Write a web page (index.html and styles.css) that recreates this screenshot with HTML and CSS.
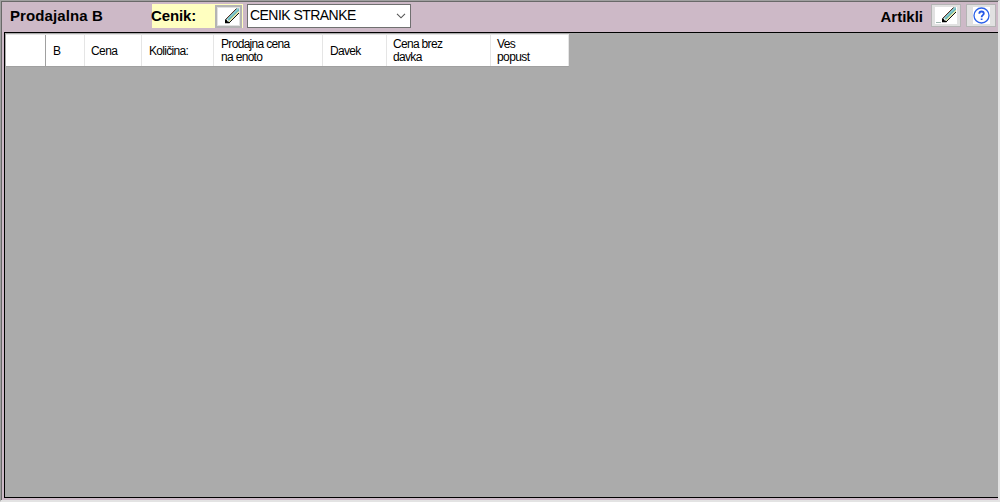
FILE: index.html
```
<!DOCTYPE html>
<html lang="sl">
<head>
<meta charset="utf-8">
<title>Prodajalna B</title>
<link rel="stylesheet" href="styles.css">
</head>
<body>
<main class="window">
  <header class="toolbar">
    <h1 class="title">Prodajalna B</h1>
    <div class="pricelist">
      <span class="label">Cenik:</span>
      <button class="tool" aria-label="Uredi cenik">
        <svg class="pencil" width="21" height="17" viewBox="0 0 21 17"><use href="#pencil"/></svg>
      </button>
      <div class="select"><span>CENIK STRANKE</span>
        <svg width="10" height="6" viewBox="0 0 10 6"><path d="M1 .8 5 4.8 9 .8" fill="none" stroke="#555" stroke-width="1.1"/></svg>
      </div>
    </div>
    <span class="articles">Artikli</span>
    <button class="tool wide" aria-label="Uredi artikle">
      <svg class="pencil" width="22" height="17" viewBox="0 0 22 17">
        <g id="pencil">
          <path d="M7.5 11.5 18.5.5H21V5L11.5 14.5z" fill="#62b3b5"/>
          <path d="M9.3 11.7 20.5.5" stroke="#93cdd6" stroke-width="1.2"/>
          <path d="M10.8 13.7 21 3.5" stroke="#f3eca8" stroke-width="1.3"/>
          <path d="M7.5 11.5 18.5.5" stroke="#5a3022" stroke-width="1"/>
          <path d="M11 15 21 5" stroke="#111" stroke-width="1"/>
          <path d="M7 11.5H8.5L11.5 14.5V15.3H7z" fill="#000"/>
          <path d="M8.3 11.3h1.4l1.6 2.2H9.6z" fill="#eee"/>
        </g>
        <path d="M1 15.5h5" stroke="#9fb5b0"/>
      </svg>
    </button>
    <button class="tool wide help" aria-label="Pomoč">
      <svg width="17" height="17" viewBox="0 0 17 17"><path d="M0 0h17v17H0z" fill="#fff"/><circle cx="8.5" cy="8.5" r="7.5" fill="#fff" stroke="#2b61ea" stroke-width="1.3"/><path d="M6.3 6.7C6.3 3.7 10.8 3.9 10.8 6.5 10.8 8.2 8.6 8.2 8.6 10.2M8.6 11.4v1.7" fill="none" stroke="#2458e8" stroke-width="1.8"/></svg>
    </button>
  </header>
  <section class="grid">
    <div class="head">
      <div class="cell selector"></div>
      <div class="cell c-b">B</div>
      <div class="cell c-price">Cena</div>
      <div class="cell c-qty">Količina:</div>
      <div class="cell c-unit">Prodajna cena<br>na enoto</div>
      <div class="cell c-tax">Davek</div>
      <div class="cell c-net">Cena brez<br>davka</div>
      <div class="cell c-disc">Ves<br>popust</div>
    </div>
  </section>
</main>
</body>
</html>
```
FILE: styles.css
```
* { box-sizing: border-box; }
body { margin: 0; background: #e3e3e3; font-family: "Liberation Sans", Arial, sans-serif; color: #000; }
.window {
  width: 1000px; height: 502px;
  display: flex; flex-direction: column;
  background: #cdb9c7;
  border-style: solid; border-color: #a0a0a0 #e3e3e3 #e3e3e3 #a0a0a0; border-width: 1px 2px 2px 1px;
  box-shadow: inset 1px 1px 0 #696969;
}
.toolbar { height: 31px; flex: none; display: flex; align-items: flex-start; padding: 3px 2px 0 9px; }
.title { margin: 0; width: 142px; font-size: 15px; font-weight: bold; line-height: 24px; letter-spacing: 0.1px; }
.pricelist { display: flex; width: 260px; height: 24px; background: linear-gradient(90deg, #ffffc0 91px, transparent 91px); }
.label { width: 63px; margin-left: -1px; margin-right: 1px; font-size: 15px; font-weight: bold; line-height: 24px; letter-spacing: -0.1px; }
.tool { flex: none; display: flex; align-items: center; justify-content: center; width: 27px; height: 23px; margin-top: 1px; padding: 0; border: 2px solid #b4b4b4; background: #e1e1e1; }
.tool svg { display: block; flex: none; }
.pencil { background: #fff; }
.wide { width: 30px; margin-top: 0; border-width: 1px; }
.help { margin-left: 5px; }
.select { flex: none; display: flex; align-items: center; justify-content: space-between; margin-left: 5px; width: 164px; height: 24px; padding: 0 4px 1px 2px; border: 1px solid #707070; background: #fff; font-size: 14px; letter-spacing: -0.54px; }
.select span { position: relative; top: -1px; }
.articles { margin-left: auto; margin-right: 8px; font-size: 15px; font-weight: bold; line-height: 26px; }
.grid { flex: 1; margin: 0 0 2px 3px; padding: 1px; border: solid #000; border-width: 1px 0 1px 1px; background: #ababab; }
.head { display: flex; width: 563px; height: 33px; background: #fff; border-top: 1px solid #e5e5e5; border-bottom: 1px solid #a0a0a0; }
.cell { display: flex; align-items: center; padding-left: 7px; padding-top: 1px; border-right: 1px solid #e5e5e5; font-size: 12px; line-height: 13px; letter-spacing: -0.68px; white-space: nowrap; }
.selector { width: 40px; border-right-color: #a0a0a0; }
.c-b { width: 39px; }
.c-price { width: 57px; padding-left: 6px; letter-spacing: -0.6px; }
.c-qty { width: 72px; }
.c-unit { width: 109px; }
.c-tax { width: 64px; }
.c-net { width: 104px; padding-left: 6px; }
.c-disc { width: 78px; padding-left: 6px; letter-spacing: -0.6px; }
.c-unit, .c-net, .c-disc { padding-top: 0; }
```
